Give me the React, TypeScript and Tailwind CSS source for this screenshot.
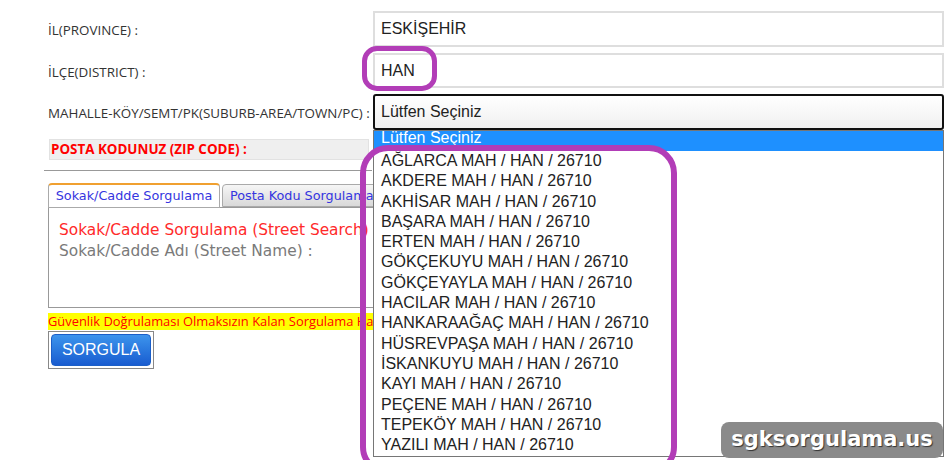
import React from "react";

const items = [
  "AĞLARCA MAH / HAN / 26710",
  "AKDERE MAH / HAN / 26710",
  "AKHİSAR MAH / HAN / 26710",
  "BAŞARA MAH / HAN / 26710",
  "ERTEN MAH / HAN / 26710",
  "GÖKÇEKUYU MAH / HAN / 26710",
  "GÖKÇEYAYLA MAH / HAN / 26710",
  "HACILAR MAH / HAN / 26710",
  "HANKARAAĞAÇ MAH / HAN / 26710",
  "HÜSREVPAŞA MAH / HAN / 26710",
  "İSKANKUYU MAH / HAN / 26710",
  "KAYI MAH / HAN / 26710",
  "PEÇENE MAH / HAN / 26710",
  "TEPEKÖY MAH / HAN / 26710",
  "YAZILI MAH / HAN / 26710",
];

const labelFont = "font-['Open_Sans','Noto_Sans',sans-serif]";
const arial = "font-['Liberation_Sans',Arial,sans-serif]";
const verdana = "font-['DejaVu_Sans',Verdana,sans-serif]";

export default function App() {
  return (
    <div className="relative w-[945px] h-[460px] overflow-hidden bg-white">
      {/* Form rows */}
      <div className="flex flex-col pt-[11px]">
        <div className="flex items-center h-[36px]">
          <div className={`w-[373px] pl-[48px] pt-[3px] text-[13.4px] text-[#333] ${labelFont}`}>İL(PROVINCE) :</div>
          <div className={`w-[571px] h-[36px] border-2 border-[#dedede] flex items-center pl-[6px] text-[16px] text-[#222] ${arial}`}>ESKİŞEHİR</div>
        </div>
        <div className="flex items-center h-[35px] mt-[6px]">
          <div className={`w-[373px] pl-[48px] pt-[3px] text-[13.4px] text-[#333] ${labelFont}`}>İLÇE(DISTRICT) :</div>
          <div className={`w-[571px] h-[35px] border-2 border-[#dedede] flex items-center pl-[6px] text-[16px] text-[#222] ${arial}`}>HAN</div>
        </div>
        <div className="flex items-center h-[36px] mt-[6px]">
          <div className={`w-[373px] pl-[48px] pt-[2px] text-[13.4px] text-[#333] whitespace-nowrap ${labelFont}`}>MAHALLE-KÖY/SEMT/PK(SUBURB-AREA/TOWN/PC) :</div>
          <div className={`w-[571px] h-[36px] border-2 border-[#111] rounded-[3px] bg-gradient-to-b from-white to-[#f0f0f0] flex items-center pl-[6px] text-[16px] text-[#222] ${arial}`}>Lütfen Seçiniz</div>
        </div>

        {/* Posta kodu bar */}
        <div className="pl-[49px] mt-[9px]">
          <div className={`w-[320px] h-[21px] bg-[#efefef] border border-[#e2e2e2] flex items-center pl-[1px] text-[13.4px] font-bold text-[#ff0000] ${labelFont}`}>
            POSTA KODUNUZ (ZIP CODE) :
          </div>
        </div>
        <div className="ml-[44px] mt-[10px] w-[328px] h-px bg-[#999]" />

        {/* Tabs */}
        <div className="pl-[48px] mt-[11px] flex flex-col">
          <div className="flex items-end h-[25px] gap-[2px]">
            <div className={`h-[25px] w-[172px] border border-[#aaa] border-t-2 border-t-[#f0a030] rounded-t-[4px] bg-white flex items-center justify-center text-[12.8px] text-[#3535e0] ${verdana} -mb-px relative z-[1]`}>
              Sokak/Cadde Sorgulama
            </div>
            <div className={`h-[23px] w-[180px] border border-[#aaa] rounded-t-[4px] bg-gradient-to-b from-[#f6f6f6] to-[#d9d9d9] flex items-center pl-[7px] text-[12.8px] text-[#3535e0] whitespace-nowrap ${verdana}`}>
              Posta Kodu Sorgulama
            </div>
          </div>
          <div className={`w-[360px] h-[101px] border border-[#999] pl-[10px] pt-[12px] ${verdana}`}>
            <div className="text-[15.4px] leading-[21px] text-[#ff2a2a] whitespace-nowrap">Sokak/Cadde Sorgulama (Street Search)</div>
            <div className="text-[15.4px] leading-[21px] text-[#7a7a7a] whitespace-nowrap">Sokak/Cadde Adı (Street Name) :</div>
          </div>
        </div>

        {/* Yellow bar */}
        <div className="pl-[48px] mt-[5px]">
          <div className={`w-[420px] h-[17px] bg-[#ffff00] whitespace-nowrap flex items-center text-[12.9px] text-[#ff0000] ${labelFont}`}>
            Güvenlik Doğrulaması Olmaksızın Kalan Sorgulama Hakkınız
          </div>
        </div>

        {/* Button */}
        <div className="pl-[48px] mt-px">
          <div className="w-[106px] h-[38px] border border-[#888] p-[2px]">
            <div className={`w-full h-full rounded-[4px] bg-gradient-to-b from-[#3d94ec] to-[#1a5cd0] border border-[#1b5fc8] flex items-center justify-center text-white text-[16px] ${arial}`}>
              SORGULA
            </div>
          </div>
        </div>
      </div>

      {/* Dropdown list (overlay) */}
      <div className={`absolute left-[373px] top-[130px] w-[571px] h-[327px] border border-[#767676] bg-white overflow-hidden ${arial}`}>
        <div className="-mt-[4px]">
          <div className="h-[24px] bg-[#1e90ff] text-white text-[16px] leading-[20px] pl-[7px] pt-[1px]">Lütfen Seçiniz</div>
          {items.map((t) => (
            <div key={t} className="h-[20.3px] text-[16px] leading-[20.3px] text-[#222] pl-[7px] whitespace-nowrap">
              {t}
            </div>
          ))}
        </div>
      </div>

      {/* Annotations */}
      <div className="absolute left-[362px] top-[46px] w-[75px] h-[45px] border-[5px] border-[#b23db7] rounded-[15px]" />
      <div className="absolute left-[360px] top-[145px] w-[317px] h-[330px] border-[6px] border-[#b23db7] rounded-[28px]" />

      {/* Watermark */}
      <div className={`absolute left-[721px] top-[422px] w-[222px] h-[36px] rounded-[8px] bg-[#8a8a8a] flex items-center justify-center text-white text-[21px] font-bold ${verdana} [text-shadow:1px_1px_1px_#333]`}>
        sgksorgulama.us
      </div>
    </div>
  );
}
